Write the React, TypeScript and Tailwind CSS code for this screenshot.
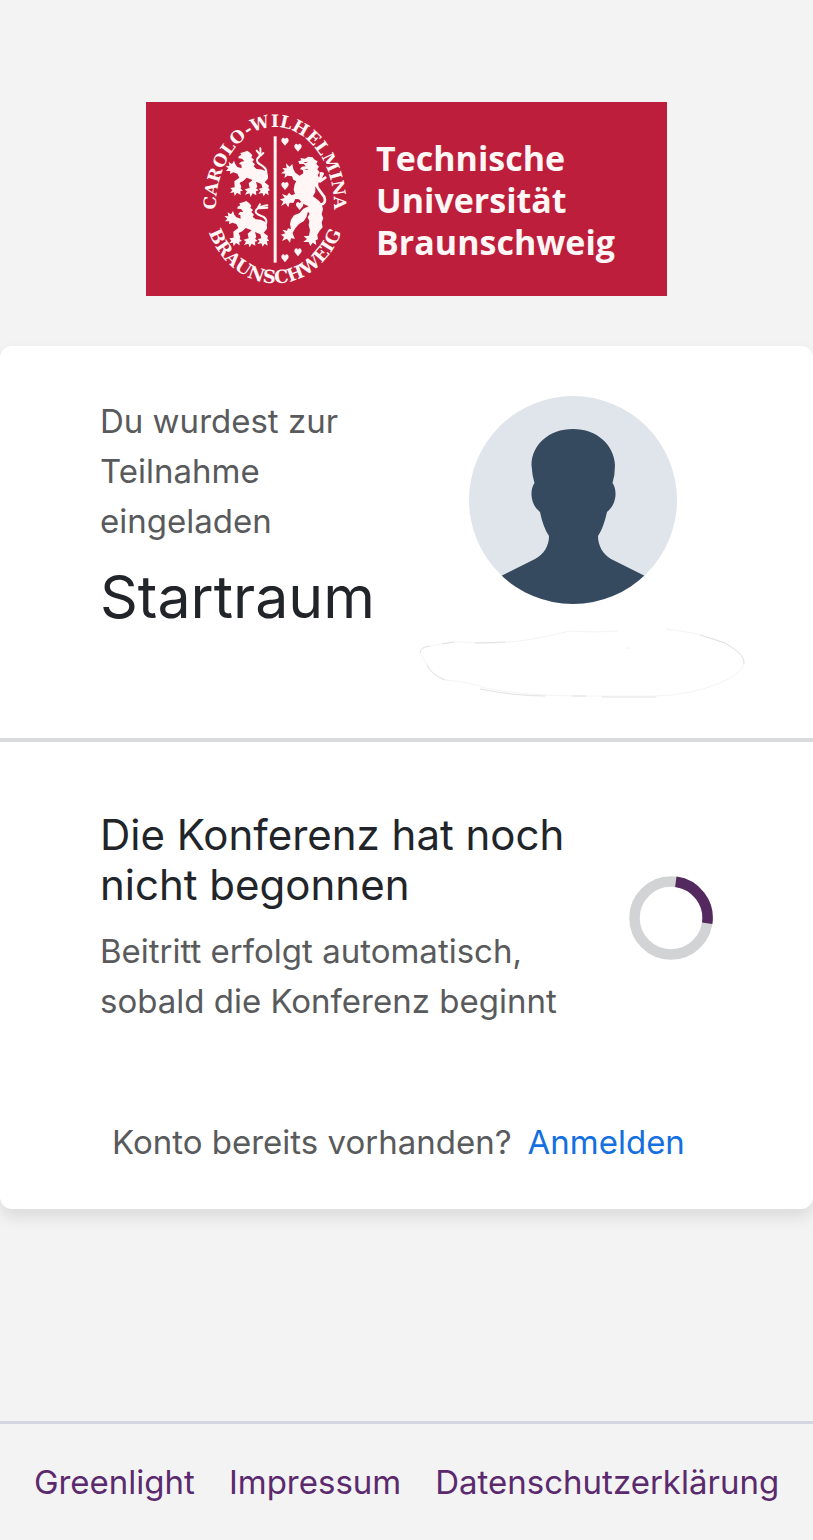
import type { ReactNode } from "react";

const FOOTER_LINKS = ["Greenlight", "Impressum", "Datenschutzerklärung"];

export default function App() {
  return (
    <div className="flex min-h-screen flex-col bg-[#f3f3f3] font-[Inter,sans-serif] text-[33px] leading-[50px] text-[#595a5c] [font-optical-sizing:none]">
      <main className="flex-1">
        <header className="flex justify-center pt-[102px] pb-[50px]">
          <Logo />
        </header>
        <section className="rounded-xl bg-white shadow-[0_8px_16px_rgba(0,0,0,0.1)]">
          <div className="grid grid-cols-2 gap-[52px] border-b-4 border-[#dadbdc] px-[100px] pt-[50px] pb-10">
            <div>
              <p>Du wurdest zur Teilnahme eingeladen</p>
              <h1 className="mt-4 text-[59px] leading-[70px] text-[#212529]">Startraum</h1>
            </div>
            <div className="flex flex-col items-center gap-6">
              <Avatar />
              <Smudge />
            </div>
          </div>
          <div className="flex items-center justify-between gap-8 px-[100px] pt-[68px]">
            <div>
              <h2 className="text-[42px] text-[#212529]">Die Konferenz hat noch nicht begonnen</h2>
              <p className="mt-4">Beitritt erfolgt automatisch, sobald die Konferenz beginnt</p>
            </div>
            <Spinner />
          </div>
          <div className="flex justify-center pt-[91px] pb-[42px]">
            <span>Konto bereits vorhanden?</span>
            <a href="#anmelden" className="px-4 text-[#146fe0]">
              Anmelden
            </a>
          </div>
        </section>
      </main>
      <footer className="flex justify-center gap-[34px] border-t-3 border-[#d4d5de] pt-[33px] pb-[33px]">
        {FOOTER_LINKS.map((label) => (
          <FooterLink key={label}>{label}</FooterLink>
        ))}
      </footer>
    </div>
  );
}

function FooterLink({ children }: { children: ReactNode }) {
  return (
    <a href="#info" className="text-[#5b2a6e]">
      {children}
    </a>
  );
}

function Spinner() {
  return (
    <svg role="status" aria-label="Warten" viewBox="0 0 84 84" className="size-[84px] shrink-0" fill="none" strokeWidth="10.5">
      <circle cx="42" cy="42" r="36.5" stroke="#d2d3d4" />
      <path d="M46.8 5.8A36.5 36.5 0 0 1 78.2 47.2" stroke="#54295f" />
    </svg>
  );
}

function Avatar() {
  return (
    <svg viewBox="0 0 208 208" className="size-52 shrink-0" aria-hidden="true">
      <clipPath id="avatar-clip">
        <circle cx="104" cy="104" r="104" />
      </clipPath>
      <g clipPath="url(#avatar-clip)">
        <path fill="#e0e5eb" d="M0 0h208v208H0z" />
        <path
          fill="#364a5f"
          d="M104 33C80 33 62.500 49 62.500 69Q63 79 65.500 87C60 95 62 109 71 116C73 126 76 134 80 140C80 150 75 158 66 163L32 180V208H176V180L142 163C134 158 129 150 129 140C133 134 136 125 138 116C147 109 149 95 143.500 87Q146 79 146 69C145 49 128 33 104 33Z"
        />
      </g>
    </svg>
  );
}

// Faint outline under the avatar where the name is blanked out
function Smudge() {
  return (
    <svg viewBox="0 0 346 70" className="h-[70px] w-[346px] shrink-0" fill="none" stroke="#f4f4f5" strokeWidth="1" aria-hidden="true">
      <path d="M20 25Q20 19 32 18Q50 13 65 14Q86 17 120 13Q150 8 170 3Q195 5 218 3M266 1Q298 4 325 15Q346 27 344 36Q341 46 320 55Q292 67 255 68H180Q125 68 85 60Q70 54 45 52Q30 46 27 37L20 25" />
      <path d="M20 25Q20 19 30 18M42 16L54 14M75 15L105 14M300 7L325 15Q346 27 344 36M27 37Q31 46 45 52M80 61Q115 68 145 68M172 68H186M202 69H256" stroke="#e2e2e4" />
      <path d="M225 20H230" />
    </svg>
  );
}

function Heart({ x, y }: { x: number; y: number }) {
  return <path transform={`translate(${x} ${y})`} d="M0 14L-10 2Q-13 -7 -6 -10Q-2 -10 0 -6Q2 -10 6 -10Q13 -7 10 2Z" />;
}

function SmallLion() {
  return (
    <path d="M296 184L304 180L301 174L312 171L322 167L331 174L337 181L334 187L342 194L337 200L345 208L341 214L350 222Q366 222 378 229Q387 240 383 252L374 262L387 272L385 279L390 286L384 288L386 301L377 295L371 304L367 294L355 296L362 287L356 281L367 279L364 267L348 260L352 275L348 280L356 286L348 289L349 301L338 295L332 306L328 295L315 299L321 289L314 283L329 279L326 265L338 255L320 248L310 258L299 263L304 275L302 281L309 287L301 289L302 300L291 293L284 303L282 292L270 294L277 286L271 279L284 277L283 259L298 248L292 236L280 232L270 237L271 228L258 228L265 220L256 212L268 213L266 201L276 207L282 197L286 208L292 216L305 220L304 209L297 207L303 200L313 199L306 191L295 190Z" />
  );
}

function Logo() {
  return (
    <svg viewBox="0 0 521 194" className="h-[194px] w-[521px]" fill="#fff6f5">
      <path fill="#bd1e3b" d="M0 0H521V194H0z" />
      <path id="seal-top" fill="none" d="M70 105A59 80 0 0 1 188 105" />
      <path id="seal-bottom" fill="none" d="M59 117A72 84 0 0 0 199 117" />
      <g fontFamily="DejaVu Serif, serif" fontWeight="700" textAnchor="middle">
        <text fontSize="17">
          <textPath href="#seal-top" startOffset="50%">
            CAROLO-WILHELMINA
          </textPath>
        </text>
        <text fontSize="18">
          <textPath href="#seal-bottom" startOffset="50%">
            BRAUNSCHWEIG
          </textPath>
        </text>
      </g>
      <g transform="translate(-6 -7) scale(.3333)">
        <path d="M401 124H410V503H401z" />
        <SmallLion />
        <g transform="translate(-3 151)">
          <SmallLion />
        </g>
        <g fill="none" stroke="#fff6f5" strokeWidth="6" strokeLinecap="round">
          <path d="M379 236Q382 222 365 211Q347 202 352 191Q364 182 361 160M361 180L350 167M362 182L370 174" />
          <path d="M378 387Q383 369 364 363Q342 356 349 344Q359 334 382 331M352 342L360 328M360 340L382 338" />
          <path d="M542 329Q560 325 553 306L537 284Q526 270 534 258Q545 249 543 235M540 259L556 248M538 257L548 236" strokeWidth="8" />
        </g>
        <path d="M475 199L484 196L481 189L495 191L505 185L518 187L524 194L533 199L529 207L537 215L532 223L539 232L533 240L538 250L530 258L532 268L526 277L526 291L519 304L534 315Q546 325 549 342L545 358L550 370L545 382L548 397L539 407L532 419L534 433L527 436L529 450L518 443L511 453L506 441L490 441L501 432L491 424L507 422L510 406L506 391L508 378L503 367L509 356L504 350L499 367L491 379L477 387L466 400L458 413L460 421L465 431L453 430L450 443L441 431L426 438L432 426L423 419L436 415L427 404L441 407L444 400L453 402L450 388L453 374L462 361L479 354L490 341L506 334L489 326L477 313L466 312L460 324L449 323L445 337L437 325L423 333L430 320L420 313L434 309L426 297L441 302L447 293L455 301L465 297L461 284L464 268L469 259L460 254L456 244L443 242L433 249L436 236L423 235L434 227L427 219L440 220L438 205L449 215L457 207L460 222L466 233L479 242L490 235L489 226L480 222L486 215L497 214L492 207L478 207Z" />
        <path fill="#bd1e3b" d="M490 202L504 200L497 205ZM492 224L502 221L504 224Z" />
        <Heart x={435} y={138} />
        <Heart x={474} y={156} />
        <Heart x={435} y={271} />
        <Heart x={479} y={331} />
        <Heart x={435} y={488} />
        <Heart x={474} y={470} />
      </g>
      <g fontFamily="Open Sans, sans-serif" fontWeight="700" fontSize="34">
        <text x="230" y="69">Technische</text>
        <text x="230" y="111">Universität</text>
        <text x="230" y="153">Braunschweig</text>
      </g>
    </svg>
  );
}
